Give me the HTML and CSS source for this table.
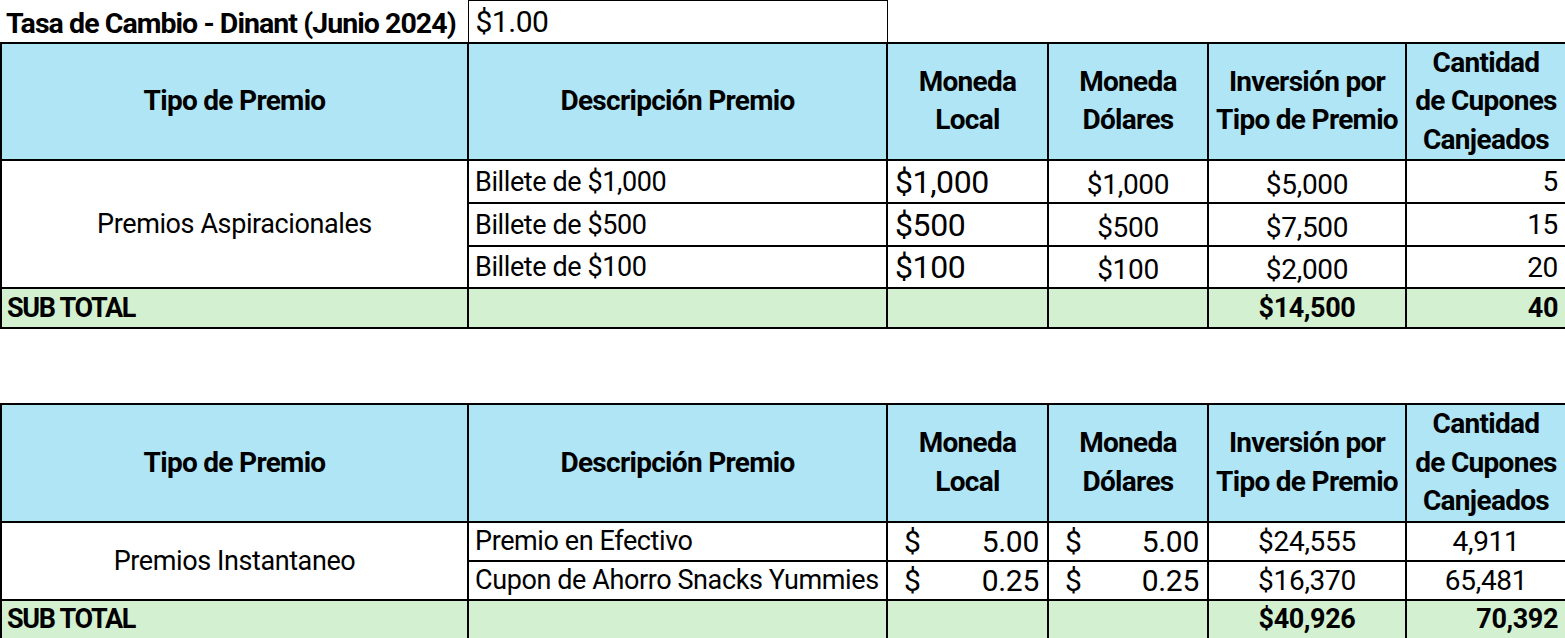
FILE: index.html
```html
<!DOCTYPE html>
<html lang="es">
<head>
<meta charset="utf-8">
<title>Tasa de Cambio - Dinant</title>
<link rel="stylesheet" href="styles.css">
</head>
<body>
<table class="sheet">
  <colgroup>
    <col class="c1"><col class="c2"><col class="c3"><col class="c4"><col class="c5"><col class="c6">
  </colgroup>
  <tr class="rate-row">
    <td class="rate-label">Tasa de Cambio - Dinant (Junio 2024)</td>
    <td class="rate-value">$1.00</td>
    <td class="blank"></td><td class="blank"></td><td class="blank"></td><td class="blank"></td>
  </tr>
  <tr class="head">
    <th>Tipo de Premio</th>
    <th>Descripción Premio</th>
    <th>Moneda<br>Local</th>
    <th>Moneda<br>Dólares</th>
    <th>Inversión por<br>Tipo de Premio</th>
    <th>Cantidad<br>de Cupones<br>Canjeados</th>
  </tr>
  <tr class="row r43">
    <td class="type" rowspan="3">Premios Aspiracionales</td>
    <td class="desc">Billete de $1,000</td>
    <td class="num big left">$1,000</td>
    <td class="num center low">$1,000</td>
    <td class="num center low">$5,000</td>
    <td class="num right">5</td>
  </tr>
  <tr class="row r43">
    <td class="desc">Billete de $500</td>
    <td class="num big left">$500</td>
    <td class="num center low">$500</td>
    <td class="num center low">$7,500</td>
    <td class="num right">15</td>
  </tr>
  <tr class="row r42">
    <td class="desc">Billete de $100</td>
    <td class="num big left">$100</td>
    <td class="num center low">$100</td>
    <td class="num center low">$2,000</td>
    <td class="num right">20</td>
  </tr>
  <tr class="sub">
    <td class="sub-label">SUB TOTAL</td>
    <td></td><td></td><td></td>
    <td class="num center">$14,500</td>
    <td class="num right">40</td>
  </tr>
</table>

<table class="sheet second">
  <colgroup>
    <col class="c1"><col class="c2"><col class="c3"><col class="c4"><col class="c5"><col class="c6">
  </colgroup>
  <tr class="head head2">
    <th>Tipo de Premio</th>
    <th>Descripción Premio</th>
    <th>Moneda<br>Local</th>
    <th>Moneda<br>Dólares</th>
    <th>Inversión por<br>Tipo de Premio</th>
    <th>Cantidad<br>de Cupones<br>Canjeados</th>
  </tr>
  <tr class="row r39">
    <td class="type" rowspan="2">Premios Instantaneo</td>
    <td class="desc">Premio en Efectivo</td>
    <td class="num acct"><span class="acc"><span>$</span><span>5.00</span></span></td>
    <td class="num acct"><span class="acc"><span>$</span><span>5.00</span></span></td>
    <td class="num center">$24,555</td>
    <td class="num center">4,911</td>
  </tr>
  <tr class="row r39">
    <td class="desc">Cupon de Ahorro Snacks Yummies</td>
    <td class="num acct"><span class="acc"><span>$</span><span>0.25</span></span></td>
    <td class="num acct"><span class="acc"><span>$</span><span>0.25</span></span></td>
    <td class="num center">$16,370</td>
    <td class="num center">65,481</td>
  </tr>
  <tr class="sub sub2">
    <td class="sub-label">SUB TOTAL</td>
    <td></td><td></td><td></td>
    <td class="num center">$40,926</td>
    <td class="num right">70,392</td>
  </tr>
</table>
</body>
</html>
```
FILE: styles.css
```css
html, body {
  margin: 0;
  padding: 0;
  background: #ffffff;
}
body {
  font-family: Roboto, "Liberation Sans", sans-serif;
  color: #000;
}
.sheet {
  width: 1565px;
  table-layout: fixed;
  border-collapse: collapse;
}
.c1 { width: 467px; }
.c2 { width: 419px; }
.c3 { width: 161px; }
.c4 { width: 160px; }
.c5 { width: 198px; }
.c6 { width: 160px; }

.sheet td, .sheet th {
  padding: 0;
  border: 2px solid #000;
  overflow: hidden;
  white-space: nowrap;
}
.rate-row { height: 42px; }
.rate-row td { vertical-align: middle; }
.rate-row .rate-label {
  border: none;
  border-bottom: 2px solid #000;
  font-weight: 700;
  font-size: 28.5px;
  letter-spacing: -0.95px;
  padding-left: 5px;
  padding-top: 4px;
}
.rate-row .rate-value {
  border: 1px solid #000;
  border-bottom: 2px solid #000;
  font-size: 30px;
  letter-spacing: -0.5px;
  padding-left: 7px;
}
.rate-row .blank {
  border: none;
  border-bottom: 2px solid #000;
}
.head { height: 117px; }
.head2 { height: 116px; }
.head th {
  background: #afe5f5;
  font-weight: 700;
  font-size: 28px;
  line-height: 38.5px;
  letter-spacing: -0.7px;
  text-align: center;
  vertical-align: middle;
}
.r43 { height: 43px; }
.r42 { height: 42px; }
.r39 { height: 39px; }
.row td { vertical-align: middle; font-size: 27px; }
.type {
  text-align: center;
  letter-spacing: -0.4px;
}
.desc {
  padding-left: 6px !important;
  letter-spacing: -0.4px;
}
.row .num {
  font-size: 28px;
  letter-spacing: -0.3px;
}
.row .num.big {
  font-size: 32px;
  letter-spacing: -0.4px;
}
.left { text-align: left; padding-left: 7px !important; }
.center { text-align: center; }
.right { text-align: right; padding-right: 7px !important; }
.low { padding-top: 5px !important; }
.acct { padding: 0 8px 0 16px !important; }
.row .acct { font-size: 30px; }
.acc {
  display: flex;
  justify-content: space-between;
}
.sub { height: 40px; }
.sub2 { height: 39px; }
.sub td {
  background: #d3f1d0;
  font-weight: 700;
  vertical-align: middle;
}
.sub .sub-label {
  font-size: 27px;
  letter-spacing: -1.3px;
  padding-left: 5px;
}
.sub .num { font-size: 27px; letter-spacing: -0.4px; }
.second { margin-top: 74px; }
```
